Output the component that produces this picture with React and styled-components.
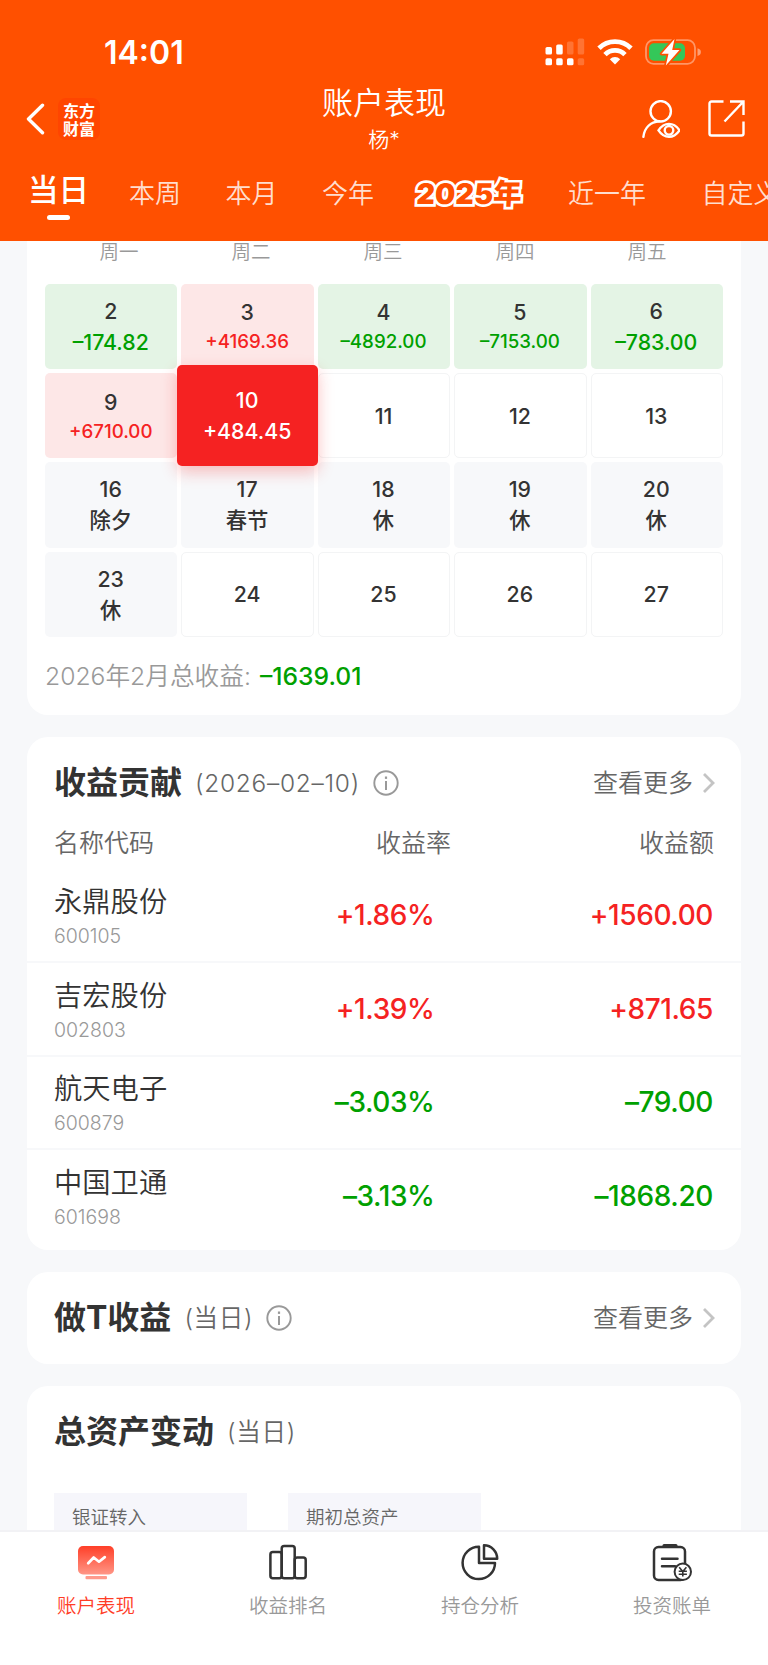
import React from 'react';
import styled, { createGlobalStyle } from 'styled-components';

const GlobalStyle = createGlobalStyle`
  * {
    box-sizing: border-box;
  }
  body {
    margin: 0;
    background: #f7f8fa;
    font-family: Inter, 'Noto Sans CJK SC', sans-serif;
    font-weight: 350;
    color: #333;
  }
`;

const Page = styled.div`
  display: flex;
  flex-direction: column;
  width: 768px;
  height: 1665px;
  overflow: hidden;
  background: #f7f8fa;
`;

const Header = styled.header`
  flex: none;
  height: 241px;
  background: #ff5000;
  color: white;
  overflow: hidden;
`;

const StatusBar = styled.div`
  display: flex;
  justify-content: space-between;
  align-items: center;
  height: 82px;
  padding: 22px 67px 0 104px;
`;

const Time = styled.div`
  padding-top: 1px;
  font-size: 32px;
  font-weight: 600;
  line-height: 40px;
`;

const StatusIcons = styled.div`
  display: flex;
  align-items: center;
  gap: 12px;
`;

const NavRow = styled.div`
  display: grid;
  grid-template-columns: 200px 1fr 200px;
  height: 76px;
`;

const NavLeft = styled.div`
  display: flex;
  align-items: center;
  gap: 13px;
  padding: 0 0 3px 26px;
`;

const Logo = styled.div`
  display: flex;
  flex-direction: column;
  align-items: center;
  justify-content: center;
  width: 42px;
  height: 42px;
  border-radius: 8px;
  background: #ff4500;
  font-family: 'Noto Sans CJK SC', sans-serif;
  font-size: 16px;
  font-weight: 700;
  line-height: 18px;
`;

const NavTitle = styled.div`
  display: flex;
  flex-direction: column;
  align-items: center;
`;

const Title = styled.div`
  margin-top: 1px;
  font-size: 31px;
  line-height: 40px;
`;

const Subtitle = styled.div`
  font-size: 21px;
  line-height: 34px;
`;

const NavRight = styled.div`
  display: flex;
  justify-content: flex-end;
  align-items: center;
  gap: 28px;
  padding: 0 23px 3px 0;
`;

const Tabs = styled.div`
  display: flex;
  height: 83px;
  white-space: nowrap;
`;

const Tab = styled.div`
  flex: none;
  width: ${(props) => props.$width}px;
  padding-top: 16px;
  font-size: 26px;
  line-height: 40px;
  color: rgba(255, 255, 255, 0.82);
  text-align: center;
`;

const ActiveTab = styled(Tab)`
  display: flex;
  flex-direction: column;
  align-items: center;
  padding-top: 12px;
  font-size: 30.5px;
  font-weight: 500;
  color: white;
  &::after {
    content: '';
    width: 23px;
    height: 5px;
    margin-top: 5px;
    border-radius: 3px;
    background: white;
  }
`;

const YearTab = styled(Tab)`
  font-size: 28.5px;
  font-weight: 900;
  letter-spacing: 0.2px;
  color: #ff5000;
  -webkit-text-stroke: 5.4px white;
  paint-order: stroke fill;
  transform: skewX(-3deg);
`;

const Content = styled.main`
  flex: 1;
  min-height: 0;
  overflow: hidden;
  padding: 0 27px;
`;

const Card = styled.section`
  margin-bottom: 22px;
  border-radius: 21px;
  background: white;
`;

const CalendarCard = styled(Card)`
  height: 474px;
  padding: 0 18px;
  border-radius: 0 0 21px 21px;
`;

const Weekdays = styled.div`
  display: grid;
  grid-template-columns: repeat(5, 132px);
  justify-content: center;
  height: 42.7px;
  padding-right: 2px;
  font-size: 19.5px;
  line-height: 22px;
  color: #999;
  text-align: center;
`;

const CalendarGrid = styled.div`
  display: grid;
  grid-template-columns: repeat(5, 1fr);
  grid-auto-rows: 85.4px;
  gap: 3.9px;
`;

const cellColors = {
  up: '#fde7e7',
  down: '#e4f4e5',
  rest: '#f7f8fa',
  plain: 'white',
};

const Cell = styled.div`
  display: flex;
  flex-direction: column;
  align-items: center;
  justify-content: center;
  padding: 1px 1px 0 0;
  border: 1px solid ${(props) => (props.$type === 'plain' ? '#f3f4f5' : 'transparent')};
  border-radius: 5px;
  background: ${(props) => cellColors[props.$type]};
  font-size: 21.3px;
  font-weight: 500;
  line-height: 31px;
  color: #333;
`;

const SelectedCell = styled(Cell)`
  z-index: 1;
  margin: -7.5px -4px -7.2px;
  border: none;
  background: #f52222;
  box-shadow: 0 6px 16px rgba(245, 34, 34, 0.28);
  color: white;
`;

const Amount = styled.div`
  font-size: ${(props) => (props.$small ? '18.7px' : '21.3px')};
  line-height: ${(props) => (props.$small ? '28px' : '31px')};
  color: ${(props) => props.$color};
`;

const Summary = styled.div`
  display: flex;
  gap: 9px;
  margin-top: 20px;
  font-size: 24.7px;
  line-height: 38px;
  color: #999;
`;

const SummaryValue = styled.span`
  font-weight: 500;
  color: #00a000;
`;

const CardHead = styled.div`
  display: flex;
  align-items: center;
  height: 92px;
  padding: 0 26px 0 27px;
`;

const CardTitle = styled.h2`
  margin: 0 13px 0 0;
  font-size: 32px;
  font-weight: 700;
  line-height: 40px;
`;

const CardNote = styled.span`
  margin-right: 13px;
  font-size: 24.5px;
  letter-spacing: 0.7px;
  line-height: 36px;
  color: #666;
`;

const More = styled.div`
  display: flex;
  align-items: center;
  gap: 8px;
  margin-left: auto;
  font-size: 25px;
  line-height: 36px;
  color: #666;
`;

const ContributionCard = styled(Card)`
  height: 513px;
`;

const TableHead = styled.div`
  display: grid;
  grid-template-columns: 200px 1fr 1fr;
  height: 40px;
  padding: 0 27px;
  font-size: 25px;
  line-height: 28px;
  color: #666;
  span:nth-child(2) {
    padding-right: 33px;
  }
  span:not(:first-child) {
    text-align: right;
  }
`;

const StockRow = styled.div`
  display: grid;
  grid-template-columns: 200px 1fr 1fr;
  align-items: center;
  height: 93.8px;
  padding: 0 28px 0 27px;
  border-bottom: 2px solid #f7f8fa;
  &:last-child {
    border-bottom-color: transparent;
  }
`;

const StockName = styled.div`
  margin-top: 6px;
  font-size: 28.3px;
  line-height: 36px;
  color: #333;
`;

const StockCode = styled.div`
  font-size: 19.5px;
  line-height: 32px;
  color: #999;
`;

const Figure = styled.div`
  margin-right: ${(props) => props.$inset || 0}px;
  font-size: 28px;
  font-weight: 550;
  letter-spacing: -0.4px;
  line-height: 36px;
  color: ${(props) => props.$color};
  text-align: right;
`;

const AssetCard = styled(Card)`
  height: 300px;
`;

const AssetBoxes = styled.div`
  display: flex;
  gap: 41px;
  padding: 15px 27px;
`;

const AssetBox = styled.div`
  width: 193px;
  height: 120px;
  padding: 9px 18px;
  background: #f6f6fb;
  font-size: 18.5px;
  line-height: 30px;
  color: #666;
`;

const BottomNav = styled.nav`
  flex: none;
  display: grid;
  grid-template-columns: repeat(4, 1fr);
  height: 135px;
  border-top: 2px solid #f2f2f5;
  background: white;
`;

const NavItem = styled.div`
  display: flex;
  flex-direction: column;
  align-items: center;
  padding-top: 10px;
  font-size: 19.5px;
  line-height: 28px;
  color: ${(props) => (props.$active ? '#ff3c26' : '#999')};
  svg {
    margin-bottom: 10px;
  }
`;

const RED = '#f52222';
const GREEN = '#00a000';

const weekdays = ['周一', '周二', '周三', '周四', '周五'];

const days = [
  { day: 2, text: '–174.82', type: 'down' },
  { day: 3, text: '+4169.36', type: 'up', small: true },
  { day: 4, text: '–4892.00', type: 'down', small: true },
  { day: 5, text: '–7153.00', type: 'down', small: true },
  { day: 6, text: '–783.00', type: 'down' },
  { day: 9, text: '+6710.00', type: 'up', small: true },
  { day: 10, text: '+484.45', type: 'up', selected: true },
  { day: 11, type: 'plain' },
  { day: 12, type: 'plain' },
  { day: 13, type: 'plain' },
  { day: 16, text: '除夕', type: 'rest' },
  { day: 17, text: '春节', type: 'rest' },
  { day: 18, text: '休', type: 'rest' },
  { day: 19, text: '休', type: 'rest' },
  { day: 20, text: '休', type: 'rest' },
  { day: 23, text: '休', type: 'rest' },
  { day: 24, type: 'plain' },
  { day: 25, type: 'plain' },
  { day: 26, type: 'plain' },
  { day: 27, type: 'plain' },
];

const stocks = [
  { name: '永鼎股份', code: '600105', rate: '+1.86%', amount: '+1560.00' },
  { name: '吉宏股份', code: '002803', rate: '+1.39%', amount: '+871.65' },
  { name: '航天电子', code: '600879', rate: '–3.03%', amount: '–79.00' },
  { name: '中国卫通', code: '601698', rate: '–3.13%', amount: '–1868.20' },
];

const amountColors = { up: RED, down: GREEN, rest: '#333' };

function SignalIcon() {
  return (
    <svg width="40" height="28" viewBox="0 0 40 28" fill="white">
      <rect x="0.5" y="9" width="6.5" height="7.5" rx="1.6" />
      <rect x="11.2" y="6.5" width="6.5" height="10" rx="1.6" />
      <rect x="22" y="3.5" width="6.5" height="13" rx="1.6" opacity="0.2" />
      <rect x="32.7" y="0.5" width="6.5" height="16" rx="1.6" opacity="0.2" />
      <rect x="0.5" y="20.3" width="6.5" height="7" rx="1.6" />
      <rect x="11.2" y="20.3" width="6.5" height="7" rx="1.6" />
      <rect x="22" y="20.3" width="6.5" height="7" rx="1.6" />
      <rect x="32.7" y="20.3" width="6.5" height="7" rx="1.6" opacity="0.2" />
    </svg>
  );
}

function WifiIcon() {
  return (
    <svg width="36" height="26" viewBox="0 0 36 26" fill="none" stroke="white" strokeWidth="4.8">
      <path d="M2 9.3a22.6 22.6 0 0 1 32 0" />
      <path d="M8 15.6a14.1 14.1 0 0 1 20 0" />
      <path d="M18 25.5l-5.2-5.3a7.4 7.4 0 0 1 10.4 0z" fill="white" stroke="none" />
    </svg>
  );
}

function BatteryIcon() {
  return (
    <svg width="56" height="28" viewBox="0 0 56 28">
      <rect x="1" y="2.2" width="49" height="23.6" rx="7.5" fill="none" stroke="white" strokeOpacity="0.4" strokeWidth="1.8" />
      <path d="M52.5 10.2c2.5.7 3.4 2 3.4 3.9s-.9 3.2-3.4 3.9z" fill="white" opacity="0.45" />
      <rect x="4" y="5.2" width="36" height="17.6" rx="5" fill="#34c759" />
      <path d="M29.5 1L16.5 15.8h7L20.8 27.5 34.5 12h-7.3z" fill="white" stroke="#ff5000" strokeWidth="3.4" strokeLinejoin="round" paintOrder="stroke" />
    </svg>
  );
}

function BackIcon() {
  return (
    <svg width="19" height="32" viewBox="0 0 19 32" fill="none" stroke="white" strokeWidth="3.4" strokeLinecap="round" strokeLinejoin="round">
      <path d="M16.5 2.3L2.5 16l14 13.7" />
    </svg>
  );
}

function UserEyeIcon() {
  return (
    <svg width="38" height="38" viewBox="0 0 38 38" fill="none" stroke="white" strokeWidth="2.4" strokeLinecap="round">
      <circle cx="18.7" cy="11.3" r="10.2" />
      <path d="M1.4 36.8C2.5 27.5 8.5 22 17.5 21.3" />
      <path d="M16.5 30.3c5.8-8.6 15.2-8.6 21 0-5.8 8.6-15.2 8.6-21 0z" />
      <circle cx="27" cy="30.3" r="4.3" />
    </svg>
  );
}

function ShareIcon() {
  return (
    <svg width="37" height="37" viewBox="0 0 37 37" fill="none" stroke="white" strokeWidth="2.4">
      <path d="M15.5 1.5h-12a2 2 0 0 0-2 2v30a2 2 0 0 0 2 2h30a2 2 0 0 0 2-2v-12" />
      <path d="M22 1.5h13.5V15M35.5 1.5l-19 20" />
    </svg>
  );
}

function InfoIcon() {
  return (
    <svg width="26" height="26" viewBox="0 0 26 26" fill="none" stroke="#999" strokeWidth="1.9">
      <circle cx="13" cy="13" r="11.7" />
      <path d="M13 11v9" strokeWidth="2" />
      <path d="M13 6.5v2.4" strokeWidth="2.2" />
    </svg>
  );
}

function ChevronIcon() {
  return (
    <svg width="14" height="22" viewBox="0 0 14 22" fill="none" stroke="#c4c4c4" strokeWidth="2.8">
      <path d="M3 2l9 9-9 9" />
    </svg>
  );
}

function PerformanceIcon() {
  return (
    <svg width="40" height="40" viewBox="0 0 40 40">
      <defs>
        <linearGradient id="screen" x1="0" y1="0" x2="0" y2="1">
          <stop offset="0" stopColor="#ff3f28" />
          <stop offset="1" stopColor="#ff9686" />
        </linearGradient>
      </defs>
      <rect x="2" y="4" width="36" height="28.5" rx="5" fill="url(#screen)" />
      <rect x="9.5" y="34" width="21.5" height="3.2" rx="1" fill="#ff9a8c" />
      <path d="M12.2 21.2l5.5-5.7 5.3 4.2 5.8-4.6" fill="none" stroke="white" strokeWidth="2.7" strokeLinecap="round" strokeLinejoin="round" />
    </svg>
  );
}

function RankIcon() {
  return (
    <svg width="40" height="40" viewBox="0 0 40 40" fill="none" stroke="#333" strokeWidth="2.5">
      <rect x="2.4" y="10" width="11.3" height="26.2" rx="2.5" />
      <rect x="13.7" y="4.1" width="13" height="32.1" rx="2.5" />
      <rect x="26.7" y="15.5" width="11" height="20.7" rx="2.5" />
    </svg>
  );
}

function PieIcon() {
  return (
    <svg width="40" height="40" viewBox="0 0 40 40" fill="none" stroke="#333" strokeWidth="2.5" strokeLinejoin="round">
      <path d="M19 4.7a16.2 16.2 0 1 0 16 16.2H19z" />
      <path d="M24 3.3v13.5h13.2A13.3 13.3 0 0 0 24 3.3z" />
    </svg>
  );
}

function BillIcon() {
  return (
    <svg width="40" height="40" viewBox="0 0 40 40" fill="none" stroke="#333" strokeWidth="2.5">
      <rect x="2" y="5" width="31" height="33" rx="4.5" />
      <path d="M12 3.6h12" strokeWidth="3" strokeLinecap="round" />
      <path d="M10 16.8h15.5M10 24.3h13" strokeLinecap="round" />
      <circle cx="30.8" cy="29.8" r="8.2" fill="white" strokeWidth="2" />
      <path d="M27.2 25.2l3.6 4.2 3.6-4.2M30.8 29.4v5.2M26.7 29.2h8.2M26.7 32.2h8.2" strokeWidth="1.6" />
    </svg>
  );
}

function DayCell({ item }) {
  const Box = item.selected ? SelectedCell : Cell;
  return (
    <Box $type={item.type}>
      <div>{item.day}</div>
      {item.text && (
        <Amount $small={item.small} $color={item.selected ? 'white' : amountColors[item.type]}>
          {item.text}
        </Amount>
      )}
    </Box>
  );
}

export default function App() {
  return (
    <Page>
      <GlobalStyle />
      <Header>
        <StatusBar>
          <Time>14:01</Time>
          <StatusIcons>
            <SignalIcon />
            <WifiIcon />
            <BatteryIcon />
          </StatusIcons>
        </StatusBar>
        <NavRow>
          <NavLeft>
            <BackIcon />
            <Logo>
              <span>东方</span>
              <span>财富</span>
            </Logo>
          </NavLeft>
          <NavTitle>
            <Title>账户表现</Title>
            <Subtitle>杨*</Subtitle>
          </NavTitle>
          <NavRight>
            <UserEyeIcon />
            <ShareIcon />
          </NavRight>
        </NavRow>
        <Tabs>
          <ActiveTab $width={117}>当日</ActiveTab>
          <Tab $width={76}>本周</Tab>
          <Tab $width={117}>本月</Tab>
          <Tab $width={76}>今年</Tab>
          <YearTab $width={166}>2025年</YearTab>
          <Tab $width={110}>近一年</Tab>
          <Tab $width={157}>自定义</Tab>
        </Tabs>
      </Header>
      <Content>
        <CalendarCard>
          <Weekdays>
            {weekdays.map((name) => (
              <span key={name}>{name}</span>
            ))}
          </Weekdays>
          <CalendarGrid>
            {days.map((item) => (
              <DayCell key={item.day} item={item} />
            ))}
          </CalendarGrid>
          <Summary>
            2026年2月总收益:
            <SummaryValue>–1639.01</SummaryValue>
          </Summary>
        </CalendarCard>
        <ContributionCard>
          <CardHead>
            <CardTitle>收益贡献</CardTitle>
            <CardNote>(2026–02–10)</CardNote>
            <InfoIcon />
            <More>
              查看更多
              <ChevronIcon />
            </More>
          </CardHead>
          <TableHead>
            <span>名称代码</span>
            <span>收益率</span>
            <span>收益额</span>
          </TableHead>
          {stocks.map((stock) => {
            const color = stock.amount[0] === '+' ? RED : GREEN;
            return (
              <StockRow key={stock.code}>
                <div>
                  <StockName>{stock.name}</StockName>
                  <StockCode>{stock.code}</StockCode>
                </div>
                <Figure $color={color} $inset={49}>
                  {stock.rate}
                </Figure>
                <Figure $color={color}>{stock.amount}</Figure>
              </StockRow>
            );
          })}
        </ContributionCard>
        <Card>
          <CardHead>
            <CardTitle>做T收益</CardTitle>
            <CardNote>(当日)</CardNote>
            <InfoIcon />
            <More>
              查看更多
              <ChevronIcon />
            </More>
          </CardHead>
        </Card>
        <AssetCard>
          <CardHead>
            <CardTitle>总资产变动</CardTitle>
            <CardNote>(当日)</CardNote>
          </CardHead>
          <AssetBoxes>
            <AssetBox>银证转入</AssetBox>
            <AssetBox>期初总资产</AssetBox>
          </AssetBoxes>
        </AssetCard>
      </Content>
      <BottomNav>
        <NavItem $active>
          <PerformanceIcon />
          账户表现
        </NavItem>
        <NavItem>
          <RankIcon />
          收益排名
        </NavItem>
        <NavItem>
          <PieIcon />
          持仓分析
        </NavItem>
        <NavItem>
          <BillIcon />
          投资账单
        </NavItem>
      </BottomNav>
    </Page>
  );
}
